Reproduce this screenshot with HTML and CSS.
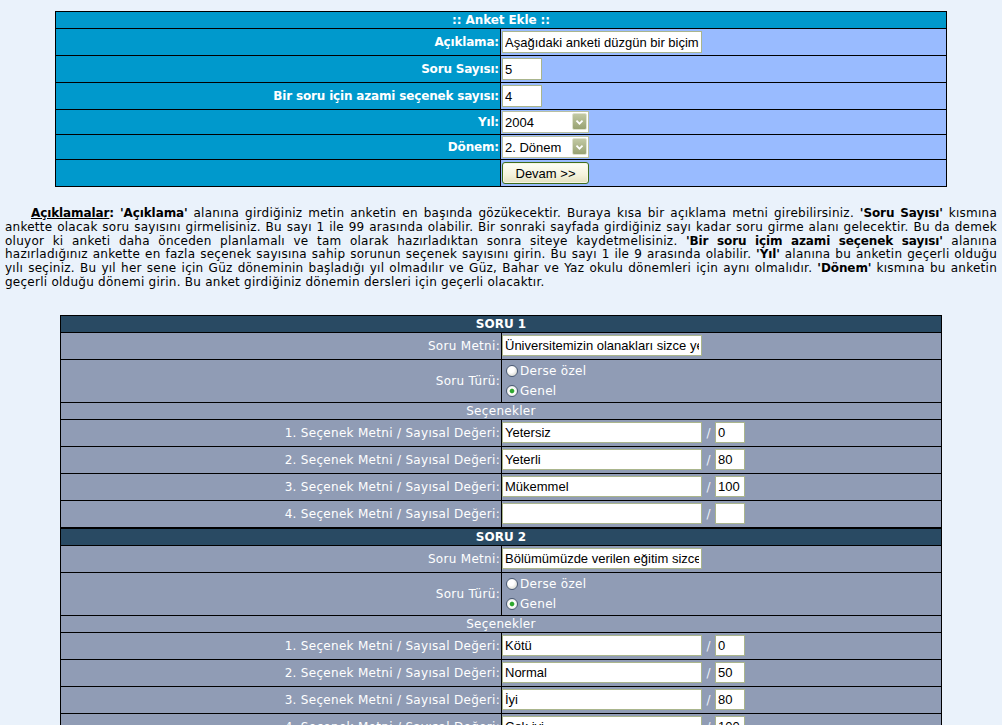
FILE: index.html
```html
<!DOCTYPE html>
<html lang="tr">
<head>
<meta charset="utf-8">
<title>Anket Ekle</title>
<link rel="stylesheet" href="styles.css">
</head>
<body>
<form class="panel">
  <div class="panel-title">:: Anket Ekle ::</div>
  <div class="plabel">Açıklama:</div>
  <div class="pval"><input class="txt w200" type="text" value="Aşağıdaki anketi düzgün bir biçimde doldurunuz."></div>
  <div class="plabel">Soru Sayısı:</div>
  <div class="pval"><input class="txt w40" type="text" value="5"></div>
  <div class="plabel">Bir soru için azami seçenek sayısı:</div>
  <div class="pval"><input class="txt w40" type="text" value="4"></div>
  <div class="plabel">Yıl:</div>
  <div class="pval">
    <span class="sel-wrap"><select class="sel"><option>2004</option><option>2005</option></select><span class="sel-btn"><svg width="15" height="16" viewBox="0 0 15 16"><path d="M4 6.5 L7.5 10 L11 6.5" stroke="#fff" stroke-width="2" fill="none"/></svg></span></span>
  </div>
  <div class="plabel">Dönem:</div>
  <div class="pval">
    <span class="sel-wrap"><select class="sel"><option>2. Dönem</option><option>1. Dönem</option></select><span class="sel-btn"><svg width="15" height="16" viewBox="0 0 15 16"><path d="M4 6.5 L7.5 10 L11 6.5" stroke="#fff" stroke-width="2" fill="none"/></svg></span></span>
  </div>
  <div class="plabel"></div>
  <div class="pval"><button class="btn" type="button">Devam &gt;&gt;</button></div>
</form>

<p class="help"><b><u>Açıklamalar</u>:</b> <b>'Açıklama'</b> alanına girdiğiniz metin anketin en başında gözükecektir. Buraya kısa bir açıklama metni girebilirsiniz. <b>'Soru Sayısı'</b> kısmına ankette olacak soru sayısını girmelisiniz. Bu sayı 1 ile 99 arasında olabilir. Bir sonraki sayfada girdiğiniz sayı kadar soru girme alanı gelecektir. Bu da demek oluyor ki anketi daha önceden planlamalı ve tam olarak hazırladıktan sonra siteye kaydetmelisiniz. <b>'Bir soru içim azami seçenek sayısı'</b> alanına hazırladığınız ankette en fazla seçenek sayısına sahip sorunun seçenek sayısını girin. Bu sayı 1 ile 9 arasında olabilir. <b>'Yıl'</b> alanına bu anketin geçerli olduğu yılı seçiniz. Bu yıl her sene için Güz döneminin başladığı yıl olmadılır ve Güz, Bahar ve Yaz okulu dönemleri için aynı olmalıdır. <b>'Dönem'</b> kısmına bu anketin geçerli olduğu dönemi girin. Bu anket girdiğiniz dönemin dersleri için geçerli olacaktır.</p>

<div class="questions">
  <div class="q">
    <div class="q-head">SORU 1</div>
    <div class="qlabel">Soru Metni:</div>
    <div class="qval"><input class="txt w200" type="text" value="Üniversitemizin olanakları sizce yeterli mi?"></div>
    <div class="qlabel">Soru Türü:</div>
    <div class="qval radios">
      <label class="rad"><input type="radio" name="t1"> Derse özel</label>
      <label class="rad"><input type="radio" name="t1" checked> Genel</label>
    </div>
    <div class="q-sub">Seçenekler</div>
    <div class="qlabel">1. Seçenek Metni / Sayısal Değeri:</div>
    <div class="qval"><input class="txt w200" type="text" value="Yetersiz"><span class="slash">/</span><input class="txt w30" type="text" value="0"></div>
    <div class="qlabel">2. Seçenek Metni / Sayısal Değeri:</div>
    <div class="qval"><input class="txt w200" type="text" value="Yeterli"><span class="slash">/</span><input class="txt w30" type="text" value="80"></div>
    <div class="qlabel">3. Seçenek Metni / Sayısal Değeri:</div>
    <div class="qval"><input class="txt w200" type="text" value="Mükemmel"><span class="slash">/</span><input class="txt w30" type="text" value="100"></div>
    <div class="qlabel">4. Seçenek Metni / Sayısal Değeri:</div>
    <div class="qval"><input class="txt w200" type="text" value=""><span class="slash">/</span><input class="txt w30" type="text" value=""></div>
  </div>
  <div class="q">
    <div class="q-head">SORU 2</div>
    <div class="qlabel">Soru Metni:</div>
    <div class="qval"><input class="txt w200" type="text" value="Bölümümüzde verilen eğitim sizce nasıl?"></div>
    <div class="qlabel">Soru Türü:</div>
    <div class="qval radios">
      <label class="rad"><input type="radio" name="t2"> Derse özel</label>
      <label class="rad"><input type="radio" name="t2" checked> Genel</label>
    </div>
    <div class="q-sub">Seçenekler</div>
    <div class="qlabel">1. Seçenek Metni / Sayısal Değeri:</div>
    <div class="qval"><input class="txt w200" type="text" value="Kötü"><span class="slash">/</span><input class="txt w30" type="text" value="0"></div>
    <div class="qlabel">2. Seçenek Metni / Sayısal Değeri:</div>
    <div class="qval"><input class="txt w200" type="text" value="Normal"><span class="slash">/</span><input class="txt w30" type="text" value="50"></div>
    <div class="qlabel">3. Seçenek Metni / Sayısal Değeri:</div>
    <div class="qval"><input class="txt w200" type="text" value="İyi"><span class="slash">/</span><input class="txt w30" type="text" value="80"></div>
    <div class="qlabel">4. Seçenek Metni / Sayısal Değeri:</div>
    <div class="qval"><input class="txt w200" type="text" value="Çok iyi"><span class="slash">/</span><input class="txt w30" type="text" value="100"></div>
  </div>
</div>
</body>
</html>
```

FILE: styles.css
```css
html {
  background: #eaf2fb;
}

body {
  margin: 5px;
  font-family: "DejaVu Sans", Verdana, sans-serif;
  font-size: 12px;
  color: #000;
}

/* top panel */
.panel {
  width: 892px;
  box-sizing: border-box;
  margin: 6px auto 0;
  display: grid;
  grid-template-columns: 444px 445px;
  grid-template-rows: 16px 26px 26px 26px 24px 24px 26px;
  gap: 1px;
  border: 1px solid #000;
  background: #000;
}

.panel-title {
  grid-column: 1 / 3;
  background: #0099cc;
  color: #fff;
  font-weight: bold;
  font-size: 12px;
  letter-spacing: -0.1px;
  text-align: center;
  line-height: 16px;
}

.plabel {
  background: #0099cc;
  color: #fff;
  font-weight: bold;
  font-size: 12px;
  letter-spacing: -0.17px;
  display: flex;
  align-items: center;
  justify-content: flex-end;
  padding-right: 1px;
}

.pval {
  background: #99bbff;
  display: flex;
  align-items: center;
  padding-left: 1px;
}

/* form controls */
.txt {
  box-sizing: border-box;
  height: 22px;
  margin: 0;
  padding: 0 2px;
  border: 1px solid #aab58c;
  background: #fff;
  font: 13px "Liberation Sans", Arial, sans-serif;
  letter-spacing: 0;
  color: #000;
  outline: none;
}

.w200 { width: 200px; }
.w40 { width: 40px; }
.w30 { width: 30px; }

.sel-wrap {
  position: relative;
  display: inline-block;
  width: 87px;
  height: 22px;
}

.sel {
  appearance: none;
  -webkit-appearance: none;
  box-sizing: border-box;
  width: 87px;
  height: 22px;
  margin: 0;
  padding: 0 2px;
  border: 1px solid #b9c0a0;
  border-radius: 0;
  background: #fff;
  font: 13px "Liberation Sans", Arial, sans-serif;
  color: #000;
  outline: none;
}

.sel-btn {
  position: absolute;
  top: 2px;
  right: 2px;
  width: 15px;
  height: 17px;
  box-sizing: border-box;
  border: 1px solid #dfe3cf;
  border-radius: 2px;
  background: linear-gradient(#c2c9a3, #98a272);
  display: flex;
  align-items: center;
  justify-content: center;
  pointer-events: none;
}

.sel-btn svg {
  display: block;
}

.btn {
  box-sizing: border-box;
  width: 87px;
  height: 22px;
  margin: 0;
  padding: 0;
  border: 1px solid #3f6e1c;
  border-radius: 3px;
  background: linear-gradient(#fffff6, #f4f2dc 60%, #e4e1c0);
  box-shadow: inset 0 0 0 1px #f6f5e4;
  font: 13px "Liberation Sans", Arial, sans-serif;
  color: #000;
}

/* explanation */
.help {
  margin: 20px 0 25px;
  font-size: 12px;
  letter-spacing: 0.25px;
  text-indent: 26px;
  text-align: justify;
  line-height: 13.8px;
}

.help b {
  letter-spacing: -0.1px;
}

/* questions */
.q {
  width: 882px;
  box-sizing: border-box;
  margin: 0 auto;
  display: grid;
  grid-template-columns: 440px 439px;
  grid-template-rows: 16px 26px 42px 16px repeat(4, 26px);
  gap: 1px;
  border: 1px solid #000;
  background: #000;
  font-size: 12px;
  color: #fff;
}

.q-head {
  grid-column: 1 / 3;
  background: #294a63;
  font-weight: bold;
  text-align: center;
  line-height: 16px;
}

.q-sub {
  grid-column: 1 / 3;
  background: #909cb5;
  text-align: center;
  line-height: 16px;
  letter-spacing: 0.3px;
}

.qlabel {
  background: #909cb5;
  display: flex;
  align-items: center;
  justify-content: flex-end;
  padding-right: 1px;
  letter-spacing: 0.3px;
}

.qval {
  background: #909cb5;
  display: flex;
  align-items: center;
}

.qval .txt {
  height: 21px;
}

.slash {
  color: #eef2f8;
  width: 13px;
  text-align: center;
}

.radios {
  flex-direction: column;
  align-items: flex-start;
  justify-content: center;
  padding-top: 1px;
}

.rad {
  display: flex;
  align-items: center;
  height: 20px;
  padding-left: 4px;
  letter-spacing: 0.3px;
}

.rad input {
  appearance: none;
  -webkit-appearance: none;
  box-sizing: border-box;
  width: 12px;
  height: 12px;
  margin: 0 2px 0 0;
  border: 1px solid #4a5a74;
  border-radius: 50%;
  background: radial-gradient(circle at 40% 35%, #ffffff 0 3px, #e4e4de 6px);
}

.rad input:checked {
  background: radial-gradient(circle, #2fa82f 0 1.8px, #8fd08f 2.3px, #fff 2.8px, #e4e4de 6px);
}
```
